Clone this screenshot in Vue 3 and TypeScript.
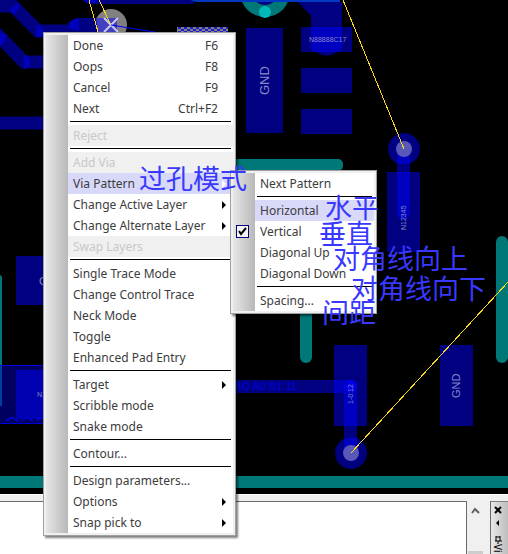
<script setup lang="ts">
interface Item {
  label: string
  keys?: string
  sub?: boolean
  disabled?: boolean
  active?: boolean
  checked?: boolean
}

const mainGroups: Item[][] = [
  [
    { label: 'Done', keys: 'F6' },
    { label: 'Oops', keys: 'F8' },
    { label: 'Cancel', keys: 'F9' },
    { label: 'Next', keys: 'Ctrl+F2' },
  ],
  [{ label: 'Reject', disabled: true }],
  [
    { label: 'Add Via', disabled: true },
    { label: 'Via Pattern', sub: true, active: true },
    { label: 'Change Active Layer', sub: true },
    { label: 'Change Alternate Layer', sub: true },
    { label: 'Swap Layers', disabled: true },
  ],
  [
    { label: 'Single Trace Mode' },
    { label: 'Change Control Trace' },
    { label: 'Neck Mode' },
    { label: 'Toggle' },
    { label: 'Enhanced Pad Entry' },
  ],
  [{ label: 'Target', sub: true }, { label: 'Scribble mode' }, { label: 'Snake mode' }],
  [{ label: 'Contour...' }],
  [{ label: 'Design parameters...' }, { label: 'Options', sub: true }, { label: 'Snap pick to', sub: true }],
]

const patternGroups: Item[][] = [
  [{ label: 'Next Pattern' }],
  [
    { label: 'Horizontal', active: true },
    { label: 'Vertical', checked: true },
    { label: 'Diagonal Up' },
    { label: 'Diagonal Down' },
  ],
  [{ label: 'Spacing...' }],
]

const menus = [
  { name: 'main', groups: mainGroups },
  { name: 'pattern', groups: patternGroups },
]

const notes = [
  { text: '过孔模式', place: 'via' },
  { text: '水平', place: 'horizontal' },
  { text: '垂直', place: 'vertical' },
  { text: '对角线向上', place: 'up' },
  { text: '对角线向下', place: 'down' },
  { text: '间距', place: 'spacing' },
]
</script>

<template>
  <div class="app">
    <svg class="board" aria-label="Board layout" role="img">
      <g fill="#007878">
        <rect x="200" y="159" width="143" height="12" rx="5" />
        <rect x="300" y="260" width="12" height="103" rx="6" />
        <rect x="496" y="236" width="12" height="127" rx="6" />
        <rect x="-8" y="275" width="10" height="131" rx="3" />
        <rect x="0" y="476" width="100%" height="12" />
        <circle cx="265" cy="-8" r="25" />
      </g>
      <circle cx="265" cy="-8" r="13" fill="#000080" />
      <circle cx="265" cy="12" r="6" fill="#00b8b8" />
      <g fill="none" stroke="#000080" stroke-width="13">
        <path d="M-4 6H13L38 31H80" />
        <path d="M-6 31L24 62H60" />
        <path d="M0 123H60" />
      </g>
      <path d="M9 11L18 2L19 8L14 14ZM37 24L43 28V36L37 37ZM0 33L6 34L5 41L0 46ZM24 55L30 58V66L24 69ZM69 22L77 18L85 20V32L69 28Z" fill="#0000c0" />
      <path d="M82 0H194V4H88Z" fill="#000080" />
      <path d="M84 0H99L96 3H87Z" fill="#0000c0" />
      <path d="M190 0H340V2H196Z" fill="#0038c0" />
      <g fill="#000080">
        <rect x="246" y="28" width="37" height="105" />
        <rect x="301" y="27" width="51" height="25" />
        <rect x="301" y="68" width="51" height="25" />
        <rect x="301" y="109" width="51" height="25" />
        <path d="M298 2H342V40A15 15 0 0 1 311 40V16Z" />
        <rect x="387" y="172" width="33" height="80" />
        <rect x="334" y="345" width="33" height="81" />
        <rect x="440" y="345" width="33" height="81" />
        <rect x="16" y="256" width="40" height="49" />
        <circle cx="404" cy="149" r="16" />
        <circle cx="351" cy="453" r="16" />
        <rect x="230" y="380" width="121" height="13" />
        <rect x="344" y="386" width="13" height="60" />
        <rect x="397" y="150" width="13" height="30" />
      </g>
      <g fill="#0000c0">
        <path d="M311 27H342V40A16 16 0 0 1 340 52H313A16 16 0 0 1 311 40Z" />
        <path d="M397 172H410V213A6 6 0 0 1 397 213ZM397 154H410V163A16 16 0 0 1 397 163Z" />
        <path d="M334 380H351A6 6 0 0 1 357 386V426H344V393H334ZM344 440A16 16 0 0 1 357 438V456H344Z" />
      </g>
      <circle cx="351" cy="386" r="6" fill="#0000e8" />
      <rect x="0" y="365" width="60" height="59" fill="#000060" />
      <rect x="0" y="366" width="2" height="40" fill="#0040a0" />
      <rect x="16" y="370" width="40" height="49" fill="#0000b0" />
      <g fill="#0000d8">
        <rect x="0" y="365" width="60" height="1" />
        <rect x="0" y="423" width="60" height="1" />
      </g>
      <path d="M0 421M6 421L10 418H13L18 421M21 421L25 418H28L33 421M36 421L40 418H43" fill="none" stroke="#0000d0" stroke-width="2" />
      <circle cx="404" cy="149" r="8" fill="#5858b8" />
      <circle cx="351" cy="453" r="8" fill="#5858b8" />
      <circle cx="111" cy="25" r="16" fill="#808080" />
      <path d="M79 18H97V40H79Z" fill="#000080" />
      <path d="M96 18H117V34H98Z" fill="#4040c0" />
      <path d="M104 18L118 32M118 18L104 32" stroke="#c8c8f0" stroke-width="2" />
      <g fill="none" stroke="#ffd820" shape-rendering="crispEdges">
        <path d="M89 0L98 32M99 0L111 25M343 0L404 149M351 453L508 282" />
      </g>
      <path d="M111 25L154 32" stroke="#0000ff" />
      <rect x="177" y="27" width="51" height="6" fill="#808080" />
      <g fill="none" stroke="#2020d0" stroke-width="2" stroke-dasharray="3 3">
        <path d="M178 28H228M178 32H228" />
        <path d="M181 30H228" />
      </g>
      <g class="net" fill="#8888c8">
        <text class="gnd" transform="translate(269 95) rotate(-90)">GND</text>
        <text class="gnd small" transform="translate(460 398) rotate(-90)">GND</text>
        <text x="309" y="42">N88888C17</text>
        <text transform="translate(406 230) rotate(-90)">N12345</text>
        <text transform="translate(353 404) rotate(-90)">1-0:12</text>
        <text x="37" y="397">N1</text>
        <text class="gnd small" x="39" y="285">G</text>
      </g>
      <text class="bus" x="231" y="390" fill="#0000e0">PIO A0 B1 11</text>
    </svg>

    <div class="dock">
      <div class="console"></div>
      <div class="scroll">
        <button class="up" aria-label="Scroll up">
          <svg width="9" height="7"><path d="M1 6L4 2L8 6" fill="none" stroke="#606060" stroke-width="2" /></svg>
        </button>
        <div class="thumb"></div>
      </div>
      <div class="side">
        <button class="close" aria-label="Close"><svg width="8" height="8"><path d="M1 1L7 7M7 1L1 7" stroke="#000" stroke-width="2" /></svg></button>
        <button class="collapse" aria-label="Collapse"><svg width="8" height="8"><path d="M5 1V7L2 4Z" /></svg></button>
        <button class="pin" aria-label="Pin"><svg width="8" height="8"><path d="M2 0V5M6 0V5M1 5H8M4 5V8M2 1H6" fill="none" stroke="#000" /></svg></button>
        <span class="tab">Vi</span>
      </div>
    </div>

    <div v-for="menu in menus" :key="menu.name" class="menu" :class="menu.name" role="menu">
      <div v-for="(group, index) in menu.groups" :key="index" class="group">
        <button
          v-for="item in group"
          :key="item.label"
          class="item"
          :class="{ active: item.active }"
          :disabled="item.disabled"
          :role="item.checked ? 'menuitemcheckbox' : 'menuitem'"
          :aria-checked="item.checked"
        >
          <span class="mark">
            <svg v-if="item.checked" width="13" height="13">
              <rect width="13" height="13" fill="#000080" />
              <rect x="1" y="1" width="11" height="11" fill="#f4f4f4" />
              <path d="M3 6L5 9L10 3" fill="none" stroke="#000" stroke-width="2" />
            </svg>
          </span>
          <span class="face">
            <span>{{ item.label }}</span>
            <span v-if="item.keys" class="keys">{{ item.keys }}</span>
            <svg v-if="item.sub" class="arrow" width="4" height="8">
              <path d="M0 0L4 4L0 8Z" :fill="item.active ? '#fff' : '#000'" />
            </svg>
          </span>
        </button>
      </div>
    </div>

    <span v-for="note in notes" :key="note.place" class="note" :class="note.place">{{ note.text }}</span>
  </div>
</template>

<style>
body {
  margin: 0;
  background: #000;
  overflow: hidden;
}
</style>

<style scoped>
.app {
  position: relative;
  display: flex;
  flex-direction: column;
  height: 100vh;
  font-family: "Noto Sans", "Noto Sans CJK SC", sans-serif;
  font-size: 12px;
}
.board {
  display: block;
  flex: 1;
  width: 100%;
  min-height: 0;
  background: #000;
}
.net {
  font-family: "Liberation Sans", sans-serif;
  font-size: 7px;
}
.gnd {
  font-size: 13px;
}
.gnd.small {
  font-size: 11px;
}
.bus {
  font-family: "Liberation Sans", sans-serif;
  font-size: 11px;
}
.dock {
  display: flex;
  height: 53px;
  padding-top: 6px;
  background: #f0f0f0;
  border-top: 1px solid #fff;
}
.console {
  flex: 1;
  background: #fff;
  border-top: 1px solid #696969;
  border-right: 1px solid #696969;
}
.scroll {
  display: flex;
  flex-direction: column;
  justify-content: space-between;
  width: 15px;
  margin: 0 7px 0 1px;
}
button {
  padding: 0;
  border: 0;
  background: none;
  font: inherit;
  color: inherit;
}
.up {
  height: 17px;
}
.thumb {
  height: 3px;
  background: #cdcdcd;
}
.side {
  display: flex;
  flex-direction: column;
  width: 14px;
  padding-right: 3px;
  border-top: 1px solid #808080;
  border-left: 1px solid #696969;
  background: linear-gradient(90deg, #e8e8e8, #bcbcbc);
}
.side button {
  display: flex;
  align-items: center;
  justify-content: center;
  flex: none;
}
.side .close {
  height: 16px;
}
.side .collapse {
  height: 10px;
}
.side .pin {
  height: 16px;
  align-items: flex-end;
}
.side svg {
  display: block;
}
.tab {
  writing-mode: vertical-rl;
  line-height: 14px;
  font-size: 10px;
}
.menu {
  position: absolute;
  box-sizing: border-box;
  padding: 2px;
  border: 1px solid #a0a0a0;
  background: #f0f0f0;
  box-shadow: 2px 2px 2px rgba(0, 0, 0, 0.5);
  color: #3c3c3c;
}
.main {
  left: 43px;
  top: 32px;
  width: 193px;
}
.pattern {
  left: 230px;
  top: 170px;
  width: 147px;
}
.group + .group::before {
  content: "";
  display: block;
  height: 1px;
  padding: 2px 2px 3px 24px;
  background: linear-gradient(#000, #000) content-box, linear-gradient(90deg, #e6e6e6, #b8b8b8 22px, #fff 22px);
}
.item {
  display: flex;
  width: 100%;
  height: 21px;
  text-align: left;
}
.mark {
  display: flex;
  box-sizing: border-box;
  align-items: center;
  width: 22px;
  height: 21px;
  padding-left: 3px;
  background: linear-gradient(90deg, #e6e6e6, #b8b8b8);
}
.face {
  display: flex;
  align-items: center;
  justify-content: space-between;
  flex: 1;
  height: 21px;
  padding-left: 5px;
  background: #fff;
}
.item:disabled .face {
  background: #f0f0f0;
  color: #c8c8c8;
}
.active .face {
  background: #d8d8f8;
}
.keys {
  padding-right: 15px;
}
.arrow {
  margin-right: 7px;
}
.note {
  position: absolute;
  font-family: "Noto Sans CJK SC", sans-serif;
  font-size: 27px;
  line-height: 30px;
  white-space: nowrap;
  color: #3838ff;
}
.note.via {
  left: 139px;
  top: 163px;
}
.note.horizontal {
  left: 325px;
  top: 192px;
}
.note.vertical {
  left: 319px;
  top: 218px;
}
.note.up {
  left: 333px;
  top: 243px;
}
.note.down {
  left: 351px;
  top: 273px;
}
.note.spacing {
  left: 322px;
  top: 297px;
}
</style>
